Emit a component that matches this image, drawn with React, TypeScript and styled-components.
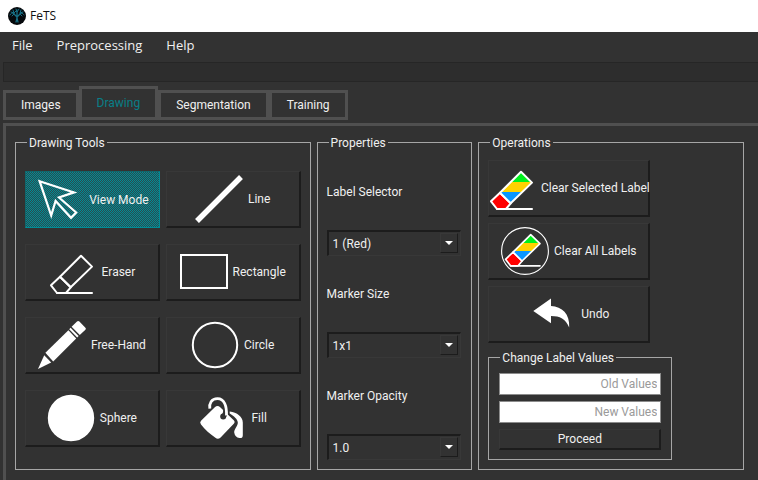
import React, { useId, useState } from "react";
import styled, { createGlobalStyle, css } from "styled-components";

const colors = {
  base: "#323232",
  deep: "#2d2d2d",
  frame: "#505050",
  shadow: "#1c1c1c",
  light: "#383838",
  line: "#a6a6a6",
  text: "#f0f0f0",
  teal: "#008c96",
};

const GlobalStyle = createGlobalStyle`
  * { box-sizing: border-box; }
  html, body, #root { height: 100%; }
  body {
    margin: 0;
    background: ${colors.base};
    color: ${colors.text};
    font: 12px/16px Roboto, "Open Sans", sans-serif;
  }
  button, input, select { font: inherit; color: inherit; margin: 0; }
`;

const Window = styled.div`
  display: flex;
  flex-direction: column;
  min-height: 100%;
`;

const TitleBar = styled.header`
  display: flex;
  align-items: center;
  gap: 4px;
  height: 32px;
  padding: 0 8px;
  background: #fff;
  color: #111;
`;

const AppName = styled.h1`
  margin: 0;
  font-family: "Open Sans", "Noto Sans", sans-serif;
  font-size: 12px;
  line-height: 16px;
  font-weight: 400;
`;

const MenuBar = styled.nav`
  display: flex;
  align-items: flex-start;
  gap: 24px;
  height: 30px;
  padding: 3px 12px;
  font-family: "Open Sans", "Noto Sans", sans-serif;
`;

const MenuItem = styled.button`
  padding: 0;
  border: 0;
  background: none;
  font-size: 13px;
  line-height: 20px;
`;

const ToolStrip = styled.div`
  height: 20px;
  margin-left: 3px;
  background: ${colors.deep};
  border: 1px solid #262626;
  border-right: 0;
`;

const TabList = styled.div`
  display: flex;
  align-items: flex-end;
  height: 38px;
  padding-left: 3px;
`;

const Tab = styled.button<{ $active: boolean }>`
  height: ${(p) => (p.$active ? 34 : 30)}px;
  padding: 0 15px;
  border: 3px solid ${colors.frame};
  background: ${colors.base};
  color: ${(p) => (p.$active ? "#087f88" : colors.text)};
`;

const Pane = styled.main`
  flex: 1;
  display: grid;
  grid-template-columns: 296fr 156fr 266fr;
  align-content: start;
  gap: 6px;
  margin: 3px 0 0 3px;
  padding: 8px 14px 10px 9px;
  border: 3px solid ${colors.frame};
  border-right: 0;
  border-bottom: 0;
`;

const Group = styled.fieldset`
  min-width: 0;
  margin: 0;
  padding: 0 9px 9px;
  border: 1px solid ${colors.line};
`;

const GroupTitle = styled.legend`
  margin-left: 2px;
  padding: 2px 2px 0;
  line-height: 14px;
`;

const ToolGrid = styled.div`
  display: grid;
  grid-template-columns: 1fr 1fr;
  gap: 16px 6px;
  padding: 21px 0 12px;
`;

const raised = css`
  border: 1px solid ${colors.light};
  border-right: 2px solid ${colors.shadow};
  border-bottom: 2px solid ${colors.shadow};
  background: ${colors.base};
`;

const pressed = css`
  border: 1px solid #10666c;
  border-right: 1px solid ${colors.teal};
  border-bottom: 1px solid ${colors.teal};
  background: conic-gradient(#2c4a4d 25%, #008c96 0 50%, #2c4a4d 0 75%, #008c96 0) 0 0 / 2px 2px;
`;

const ToolButton = styled.button<{ $pressed?: boolean }>`
  display: flex;
  align-items: center;
  justify-content: center;
  gap: 5px;
  height: 57px;
  padding: 0;
  white-space: nowrap;
  ${(p) => (p.$pressed ? pressed : raised)}
`;

const Icon = styled.svg`
  flex: none;
  width: 48px;
  height: 48px;
  overflow: visible;
`;

const Logo = styled.svg`
  width: 18px;
  height: 18px;
`;

const Fields = styled.div`
  display: flex;
  flex-direction: column;
  gap: 30px;
  padding: 34px 1px 0 0;
`;

const Field = styled.div`
  display: flex;
  flex-direction: column;
  gap: 30px;
`;

const SelectBox = styled.div`
  position: relative;
  height: 26px;
`;

const Select = styled.select`
  appearance: none;
  width: 100%;
  height: 100%;
  padding: 0 24px 0 4px;
  border: 1px solid ${colors.light};
  border-top: 2px solid ${colors.shadow};
  border-left: 2px solid ${colors.shadow};
  border-radius: 0;
  background: ${colors.base};
`;

const Arrow = styled.span`
  position: absolute;
  top: 3px;
  right: 3px;
  bottom: 3px;
  display: flex;
  align-items: center;
  justify-content: center;
  width: 18px;
  pointer-events: none;
  ${raised}
  border-right-width: 1px;
  border-bottom-width: 1px;
`;

const Operations = styled.div`
  display: flex;
  flex-direction: column;
  gap: 6px;
  max-width: 184px;
  padding-top: 10px;
`;

const OperationButton = styled(ToolButton)`
  width: 88%;
`;

const ValueForm = styled.form`
  display: flex;
  flex-direction: column;
  gap: 6px;
  padding: 8px 1px 0;
`;

const ValueInput = styled.input`
  width: 100%;
  height: 22px;
  padding: 0 3px;
  border: 1px solid #8c8c8c;
  border-radius: 0;
  background: #fff;
  color: #222;
  text-align: right;
  &::placeholder { color: #9a9a9a; opacity: 1; }
`;

const Proceed = styled.button`
  height: 21px;
  padding: 0;
  ${raised}
`;

const TreeLogo = () => (
  <Logo viewBox="0 0 18 18" aria-hidden="true">
    <circle cx="9" cy="9" r="9" fill="#06090c" />
    <g fill="none" stroke="#176f85" strokeLinecap="round">
      <path d="M8 15c1-2 1-4 1-6M10 15c-1-2-1-4-1-6M9 10L5 6M9 10l4-4M9 9V4" strokeWidth="1.3" />
      <path d="M2 8c1-2 2-2 3-2M3 5l3 1M5 3l1 3 3-3M8 2l1 3 2-3M13 3l-1 3 3-1M13 6c2 0 2 1 3 2M4 9l2-2M14 9l-2-2" strokeWidth="1" />
    </g>
  </Logo>
);

const ArrowIcon = () => (
  <Icon viewBox="0 0 48 48">
    <path d="M3.6 5.2L38 16.4 23 21.5 40.2 36.5 35 41.8 19.6 25 15.2 39.5Z" fill="none" stroke="#fff" strokeWidth="2.2" />
  </Icon>
);

const LineIcon = () => (
  <Icon viewBox="0 0 48 48">
    <path d="M2 46L46 2" stroke="#fff" strokeWidth="5.4" />
  </Icon>
);

const EraserShape = ({ fill, tip }: { fill: string; tip: string }) => (
  <g stroke="#fff" strokeWidth="2" strokeLinejoin="round" strokeLinecap="round">
    <path d="M12 28.7L3 37.3 9 45H18L22.7 39.3Z" fill={tip} />
    <path d="M12 28.7L33 7.8 44 18.6 22.7 39.3Z" fill={fill} />
    <path d="M9 45H44" />
  </g>
);

const EraserIcon = () => (
  <Icon viewBox="0 0 48 48">
    <EraserShape fill="none" tip="none" />
  </Icon>
);

const ColorEraserIcon = ({ ringed = false }: { ringed?: boolean }) => {
  const id = useId();
  return (
    <Icon viewBox="0 0 48 48">
      <linearGradient id={id} gradientUnits="userSpaceOnUse" x1="0" y1="8" x2="0" y2="38">
        <stop offset="0.33" stopColor="#00f01e" />
        <stop offset="0.33" stopColor="#ffd200" />
        <stop offset="0.65" stopColor="#ffd200" />
        <stop offset="0.65" stopColor="#0a96ff" />
      </linearGradient>
      {ringed && <circle cx="24" cy="24" r="23.4" fill="none" stroke="#fff" strokeWidth="1.1" />}
      <g transform={ringed ? "translate(2 1) scale(0.84)" : undefined}>
        <EraserShape fill={`url(#${id})`} tip="#f00" />
      </g>
    </Icon>
  );
};

const RectangleIcon = () => (
  <Icon viewBox="0 0 48 48">
    <rect x="1" y="7" width="46" height="33" fill="none" stroke="#fff" strokeWidth="2" />
  </Icon>
);

const PencilIcon = () => (
  <Icon viewBox="0 0 48 48">
    <g fill="#fff">
      <path d="M0 48L6.2 34.2 13.2 41.6Z" />
      <path d="M7.4 31.8L30.4 9.2 38.2 17.4 15.2 40.4Z" />
      <path d="M31.2 8.2L32.6 6.8 40.6 15 39.2 16.4Z" />
      <path d="M33.6 5.8L39 .6Q40.2-.4 41.4.6L47.4 6.8Q48.4 7.8 47.4 8.8L41.8 14Z" />
    </g>
  </Icon>
);

const CircleIcon = ({ filled = false }: { filled?: boolean }) => (
  <Icon viewBox="0 0 48 48">
    <circle cx="24" cy="24" r="22.2" fill={filled ? "#fff" : "none"} stroke="#fff" strokeWidth="2" />
  </Icon>
);

const FillIcon = () => (
  <Icon viewBox="0 0 48 48">
    <path d="M3 26.8L16.8 13.2Q19.5 10.6 22.2 13.2L36 26.6Q37.4 28 36 29.4L22.6 43.4Q20 45.8 17.4 43.8C12 40 7 36 3 30.6Q1.4 28.4 3 26.8Z" fill="#fff" />
    <path d="M25.2 22.6C28.6 19.4 30 4.6 19.5 4.6 13.4 4.6 10.8 10 12 14.6" fill="none" stroke={colors.base} strokeWidth="5" />
    <circle cx="25.2" cy="22.6" r="3" fill={colors.base} />
    <path d="M28.5 21.5C28.8 12 26.4 4.6 19.5 4.6 13.4 4.6 11 9.5 11.8 14.6" fill="none" stroke="#fff" strokeWidth="2.8" />
    <path d="M31.7 17.4C39 18.4 44.8 22.4 44.8 28.4V41.2Q44.8 44.4 41.4 44 37 43.6 36.2 38.6C36 34.8 40 32 39.8 28.4 39.6 25.6 35.8 21.8 31.7 19.6Z" fill="#fff" />
  </Icon>
);

const UndoIcon = () => (
  <Icon viewBox="0 0 48 48">
    <path d="M5.3 21L23 8.5V16C34 16.4 42 24 41.2 37.4 37.5 28.6 32 26 23 26V33.2Z" fill="#fff" />
  </Icon>
);

const tools = [
  { name: "View Mode", icon: <ArrowIcon /> },
  { name: "Line", icon: <LineIcon /> },
  { name: "Eraser", icon: <EraserIcon /> },
  { name: "Rectangle", icon: <RectangleIcon /> },
  { name: "Free-Hand", icon: <PencilIcon /> },
  { name: "Circle", icon: <CircleIcon /> },
  { name: "Sphere", icon: <CircleIcon filled /> },
  { name: "Fill", icon: <FillIcon /> },
];

const properties = [
  { id: "label-selector", label: "Label Selector", options: ["1 (Red)", "2 (Green)", "3 (Blue)"] },
  { id: "marker-size", label: "Marker Size", options: ["1x1", "3x3", "5x5"] },
  { id: "marker-opacity", label: "Marker Opacity", options: ["1.0", "0.5", "0.0"] },
];

export default function App() {
  const [tab, setTab] = useState("Drawing");
  const [tool, setTool] = useState("View Mode");

  return (
    <>
      <GlobalStyle />
      <Window>
        <TitleBar>
          <TreeLogo />
          <AppName>FeTS</AppName>
        </TitleBar>
        <MenuBar>
          {["File", "Preprocessing", "Help"].map((item) => (
            <MenuItem key={item} type="button">{item}</MenuItem>
          ))}
        </MenuBar>
        <ToolStrip />
        <TabList role="tablist">
          {["Images", "Drawing", "Segmentation", "Training"].map((name) => (
            <Tab
              key={name}
              type="button"
              role="tab"
              aria-selected={tab === name}
              $active={tab === name}
              onClick={() => setTab(name)}
            >
              {name}
            </Tab>
          ))}
        </TabList>
        <Pane>
          <Group>
            <GroupTitle>Drawing Tools</GroupTitle>
            <ToolGrid>
              {tools.map(({ name, icon }) => (
                <ToolButton
                  key={name}
                  type="button"
                  aria-pressed={tool === name}
                  $pressed={tool === name}
                  onClick={() => setTool(name)}
                >
                  {icon}
                  {name}
                </ToolButton>
              ))}
            </ToolGrid>
          </Group>
          <Group>
            <GroupTitle>Properties</GroupTitle>
            <Fields>
              {properties.map(({ id, label, options }) => (
                <Field key={id}>
                  <label htmlFor={id}>{label}</label>
                  <SelectBox>
                    <Select id={id}>
                      {options.map((option) => (
                        <option key={option}>{option}</option>
                      ))}
                    </Select>
                    <Arrow>
                      <svg width="8" height="4" viewBox="0 0 8 4" aria-hidden="true">
                        <path d="M0 0H8L4 4Z" fill="#fff" />
                      </svg>
                    </Arrow>
                  </SelectBox>
                </Field>
              ))}
            </Fields>
          </Group>
          <Group>
            <GroupTitle>Operations</GroupTitle>
            <Operations>
              <OperationButton type="button"><ColorEraserIcon />Clear Selected Label</OperationButton>
              <OperationButton type="button"><ColorEraserIcon ringed />Clear All Labels</OperationButton>
              <OperationButton type="button"><UndoIcon />Undo</OperationButton>
              <Group>
                <GroupTitle>Change Label Values</GroupTitle>
                <ValueForm onSubmit={(e) => e.preventDefault()}>
                  <ValueInput aria-label="Old Values" placeholder="Old Values" />
                  <ValueInput aria-label="New Values" placeholder="New Values" />
                  <Proceed type="submit">Proceed</Proceed>
                </ValueForm>
              </Group>
            </Operations>
          </Group>
        </Pane>
      </Window>
    </>
  );
}
